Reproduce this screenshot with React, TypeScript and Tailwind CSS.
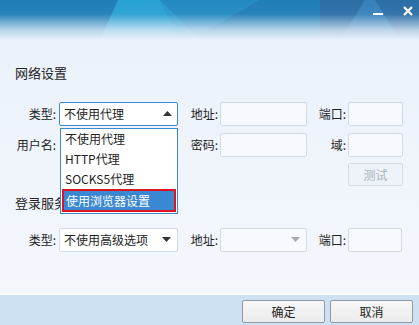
import React from "react";

const font = { fontFamily: '"Noto Sans CJK SC", "Microsoft YaHei", sans-serif' };

function Label({ w, children }: { w: string; children: React.ReactNode }) {
  return <span className={`${w} shrink-0 text-right text-[12px] text-[#222]`}>{children}</span>;
}

function Field({ w, ml = "ml-[2px]" }: { w: string; ml?: string }) {
  return <div className={`${w} ${ml} h-[24px] shrink-0 rounded-[2px] border border-[#d3dbe5] bg-[#f6f9fd]`} />;
}

function Header() {
  return (
    <div className="relative h-[40px] w-full">
      <svg width="419" height="40" viewBox="0 0 419 40" className="absolute inset-0">
        <defs>
          <linearGradient id="fade" x1="0" y1="0" x2="0" y2="1">
            <stop offset="0" stopColor="#eaf1fa" stopOpacity="0" />
            <stop offset="0.35" stopColor="#eaf1fa" stopOpacity="0.05" />
            <stop offset="0.75" stopColor="#eaf1fa" stopOpacity="0.75" />
            <stop offset="1" stopColor="#eaf1fa" stopOpacity="1" />
          </linearGradient>
        </defs>
        <rect width="419" height="40" fill="#1f7db6" />
        <polygon points="118,0 160,0 200,40 100,40" fill="#27a0d2" />
        <polygon points="160,0 260,0 190,40 178,40" fill="#2491c8" opacity="0.6" />
        <rect x="320" y="0" width="99" height="40" fill="#2b6ea6" />
        <polygon points="365,0 375,0 400,40 340,40" fill="#3a86bf" opacity="0.8" />
        <rect width="419" height="40" fill="url(#fade)" />
      </svg>
      <div className="absolute right-[5px] top-[5px] flex items-center gap-[18px]">
        <svg width="12" height="12" viewBox="0 0 12 12">
          <rect x="1" y="8" width="10" height="2" fill="#fff" />
        </svg>
        <svg width="12" height="12" viewBox="0 0 12 12">
          <path d="M2 2 L10 10 M10 2 L2 10" stroke="#fff" strokeWidth="2.2" />
        </svg>
      </div>
    </div>
  );
}

function Dropdown() {
  const items = ["不使用代理", "HTTP代理", "SOCKS5代理"];
  return (
    <div className="absolute left-[1px] top-[26px] z-10 w-[118px] border border-[#3d8ad3] bg-white">
      {items.map((t) => (
        <div key={t} className="h-[20px] pl-[4px] text-[12px] leading-[20px] text-[#222]">
          {t}
        </div>
      ))}
      <div className="mx-[1px] mb-[1px] h-[23px] border-2 border-[#e0141e] bg-[#3a88d2] pl-[2px] text-[12px] leading-[19px] text-white">
        使用浏览器设置
      </div>
    </div>
  );
}

export default function App() {
  return (
    <div
      className="flex h-[325px] w-[419px] flex-col overflow-hidden bg-gradient-to-b from-[#eaf1fa] to-[#f5f8fd]"
      style={font}
    >
      <Header />
      <div className="flex flex-1 flex-col pl-[15px]">
        <div className="mt-[25px] h-[16px] text-[13px] leading-[16px] text-[#222]">网络设置</div>

        <div className="mt-[21px] flex h-[24px] items-center">
          <Label w="w-[41px]">类型:</Label>
          <div className="relative ml-[3px] w-[119px] shrink-0">
            <div className="flex h-[24px] items-center justify-between rounded-[2px] border border-[#3d8ad3] bg-white pl-[4px] pr-[5px]">
              <span className="text-[12px] text-[#222]">不使用代理</span>
              <svg width="9" height="6" viewBox="0 0 9 6">
                <polygon points="0,5 4.5,0 9,5" fill="#333" />
              </svg>
            </div>
            <Dropdown />
          </div>
          <Label w="w-[40px]">地址:</Label>
          <Field w="w-[87px]" />
          <Label w="w-[39px]">端口:</Label>
          <Field w="w-[55px]" />
        </div>

        <div className="mt-[7px] flex h-[24px] items-center">
          <Label w="w-[41px]">用户名:</Label>
          <div className="ml-[3px] w-[119px] shrink-0" />
          <Label w="w-[40px]">密码:</Label>
          <Field w="w-[87px]" />
          <Label w="w-[39px]">域:</Label>
          <Field w="w-[55px]" />
        </div>

        <div className="mt-[6px] flex h-[23px] pl-[333px]">
          <div className="flex w-[55px] items-center justify-center rounded-[2px] border border-[#d3dbe5] bg-[#eef3f9] text-[12px] text-[#a9b1ba]">
            测试
          </div>
        </div>

        <div className="mt-[9px] h-[16px] text-[13px] leading-[16px] text-[#222]">登录服务器</div>

        <div className="mt-[17px] flex h-[24px] items-center">
          <Label w="w-[41px]">类型:</Label>
          <div className="ml-[3px] flex h-[24px] w-[119px] shrink-0 items-center justify-between rounded-[2px] border border-[#d3dbe5] bg-white pl-[4px] pr-[6px]">
            <span className="text-[12px] text-[#222]">不使用高级选项</span>
            <svg width="9" height="6" viewBox="0 0 9 6">
              <polygon points="0,0 9,0 4.5,5" fill="#333" />
            </svg>
          </div>
          <Label w="w-[40px]">地址:</Label>
          <div className="ml-[2px] flex h-[24px] w-[87px] shrink-0 items-center justify-end rounded-[2px] border border-[#d3dbe5] bg-[#f6f9fd] pr-[6px]">
            <svg width="9" height="6" viewBox="0 0 9 6">
              <polygon points="0,0 9,0 4.5,5" fill="#a3abb4" />
            </svg>
          </div>
          <Label w="w-[39px]">端口:</Label>
          <Field w="w-[54px]" />
        </div>
      </div>

      <div className="h-[2px] bg-white" />
      <div className="flex h-[30px] items-start justify-end gap-[5px] bg-[#cde1f2] pr-[6px] pt-[5px]">
        {["确定", "取消"].map((t) => (
          <div
            key={t}
            className="flex h-[23px] w-[83px] items-center justify-center rounded-[2px] border border-[#8d9aa6] bg-gradient-to-b from-[#f7f7f7] to-[#ececec] text-[12px] text-[#222]"
          >
            {t}
          </div>
        ))}
      </div>
    </div>
  );
}
